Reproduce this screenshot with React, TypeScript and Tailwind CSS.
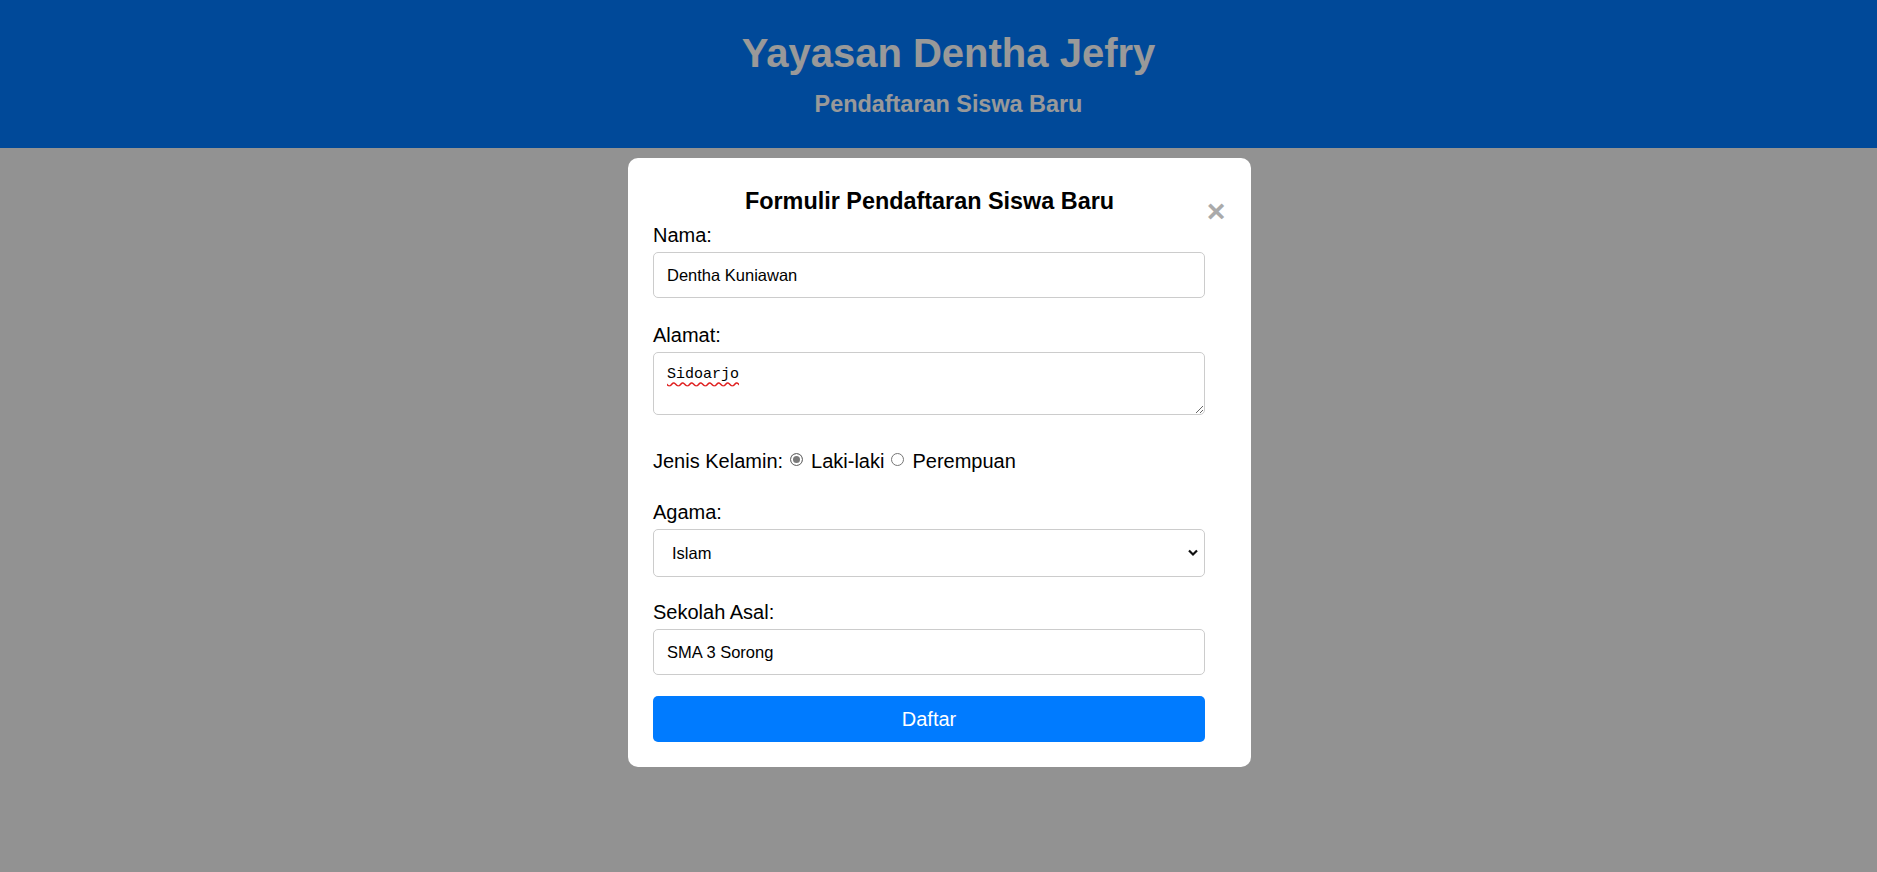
import React, { useState } from "react";

const App: React.FC = () => {
  const [gender, setGender] = useState("L");

  return (
    <div className="min-h-screen bg-[#f4f4f4] font-['Liberation_Sans',Arial,sans-serif]">
      <header className="bg-[#007bff] pl-[20px] pt-[30px] pb-[30px] text-center text-white">
        <h1 className="text-[40px] font-bold leading-[46px]">Yayasan Dentha Jefry</h1>
        <p className="mt-[14px] text-[23.4px] font-bold leading-[28px]">Pendaftaran Siswa Baru</p>
      </header>

      {/* modal overlay */}
      <div className="fixed inset-0 flex items-start justify-center bg-[rgba(0,0,0,0.4)] pl-[2px] pt-[158px]">
        <div className="w-[623px] rounded-[10px] bg-white px-[25px] pt-[29px] pb-[25px] text-black">
          <div className="flex h-[28px] items-start">
            <h2 className="flex-1 text-center text-[23.4px] font-bold leading-[28px]">
              Formulir Pendaftaran Siswa Baru
            </h2>
            <span className="mt-[10px] w-[20px] cursor-pointer text-center text-[32px] font-bold leading-[28px] text-[#aaa]">
              ×
            </span>
          </div>

          <form className="flex w-[552px] flex-col" onSubmit={(e) => e.preventDefault()}>
            <label className="mt-[9px] text-[20px] leading-[23px]">Nama:</label>
            <input
              type="text"
              defaultValue="Dentha Kuniawan"
              className="mt-[5px] h-[46px] w-full rounded-[5px] border border-[#ccc] pl-[13px] text-[16.5px] text-black outline-none"
            />

            <label className="mt-[26px] text-[20px] leading-[23px]">Alamat:</label>
            <textarea
              defaultValue="Sidoarjo"
              className="mt-[5px] block h-[63px] w-full rounded-[5px] border border-[#ccc] pl-[13px] pt-[13px] font-['Liberation_Mono',monospace] text-[15px] leading-[17px] text-black underline decoration-[#e02020] decoration-wavy underline-offset-[3px] outline-none"
            />

            <div className="mt-[35px] flex items-center text-[20px] leading-[23px]">
              <span>Jenis Kelamin:</span>
              <input
                type="radio"
                name="jk"
                checked={gender === "L"}
                onChange={() => setGender("L")}
                className="mb-[4px] ml-[7px] h-[13px] w-[13px] appearance-none rounded-full border border-[#767676] checked:border-[#6e6e6e] checked:bg-[#7a7a7a] checked:shadow-[inset_0_0_0_2px_white]"
              />
              <span className="ml-[8px]">Laki-laki</span>
              <input
                type="radio"
                name="jk"
                checked={gender === "P"}
                onChange={() => setGender("P")}
                className="mb-[4px] ml-[7px] h-[13px] w-[13px] appearance-none rounded-full border border-[#767676] checked:border-[#6e6e6e] checked:bg-[#7a7a7a] checked:shadow-[inset_0_0_0_2px_white]"
              />
              <span className="ml-[8px]">Perempuan</span>
            </div>

            <label className="mt-[28px] text-[20px] leading-[23px]">Agama:</label>
            <div className="relative mt-[5px]">
              <select
                defaultValue="Islam"
                className="h-[48px] w-full appearance-none rounded-[5px] border border-[#ccc] bg-white pl-[18px] text-[16.5px] text-black outline-none"
              >
                <option>Islam</option>
                <option>Kristen</option>
                <option>Katolik</option>
                <option>Hindu</option>
                <option>Buddha</option>
                <option>Konghucu</option>
              </select>
              <svg
                className="pointer-events-none absolute right-[7px] top-[20px] h-[8px] w-[10px]"
                viewBox="0 0 10 8"
                fill="none"
              >
                <path d="M1 1.5L5 5.5L9 1.5" stroke="#111" strokeWidth="2.2" />
              </svg>
            </div>

            <label className="mt-[24px] text-[20px] leading-[23px]">Sekolah Asal:</label>
            <input
              type="text"
              defaultValue="SMA 3 Sorong"
              className="mt-[5px] h-[46px] w-full rounded-[5px] border border-[#ccc] pl-[13px] text-[16.5px] text-black outline-none"
            />

            <button
              type="submit"
              className="mt-[21px] h-[46px] w-full rounded-[5px] bg-[#007bff] text-[20px] text-white"
            >
              Daftar
            </button>
          </form>
        </div>
      </div>
    </div>
  );
};

export default App;
